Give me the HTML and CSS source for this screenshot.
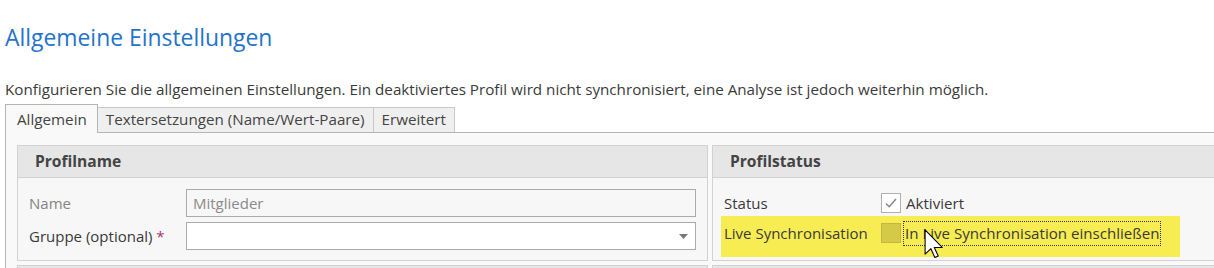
FILE: index.html
```html
<!DOCTYPE html>
<html lang="de">
<head>
  <meta charset="UTF-8">
  <meta name="viewport" content="width=device-width, initial-scale=1.0">
  <title>Allgemeine Einstellungen</title>
  <link rel="stylesheet" href="styles.css">
</head>
<body>
  <div class="page">
    <h1 class="page-title">Allgemeine Einstellungen</h1>
    <p class="page-desc">Konfigurieren Sie die allgemeinen Einstellungen. Ein deaktiviertes Profil wird nicht synchronisiert, eine Analyse ist jedoch weiterhin möglich.</p>

    <div class="tabs">
      <div class="tab-strip">
        <span class="tab active">Allgemein</span>
        <span class="tab">Textersetzungen (Name/Wert-Paare)</span>
        <span class="tab">Erweitert</span>
      </div>

      <div class="tab-panel">
        <div class="group-row">
          <section class="group">
            <div class="group-head">Profilname</div>
            <div class="group-body">
              <div class="field">
                <label class="field-label muted">Name</label>
                <div class="input disabled">Mitglieder</div>
              </div>
              <div class="field">
                <label class="field-label">Gruppe (optional) <span class="req">*</span></label>
                <div class="input select">
                  <svg class="arrow" width="9" height="5" viewBox="0 0 9 5"><path d="M0 0h9L4.5 5z" fill="#7a7a7a"/></svg>
                </div>
              </div>
            </div>
          </section>

          <section class="group">
            <div class="group-head">Profilstatus</div>
            <div class="group-body">
              <div class="field check-field">
                <label class="field-label">Status</label>
                <span class="checkbox checked">
                  <svg width="14" height="12" viewBox="0 0 14 12"><path d="M2 6.5l3.2 3.2L12 2" fill="none" stroke="#8a8a8a" stroke-width="1.6"/></svg>
                </span>
                <span class="check-text">Aktiviert</span>
              </div>
              <div class="field check-field marked">
                <label class="field-label">Live Synchronisation</label>
                <span class="checkbox"></span>
                <span class="check-text focused">In Live Synchronisation einschließen</span>
                <svg class="cursor" width="19" height="29" viewBox="0 0 12 19">
                  <path d="M0.5 0.5v16l3.8-3.6 2.6 5.8 2.2-1-2.6-5.6h5.2z" fill="#fff" stroke="#000" stroke-width="0.7" stroke-linejoin="round"/>
                </svg>
              </div>
            </div>
          </section>
        </div>

        <div class="group-row">
          <section class="group">
            <div class="group-head"></div>
          </section>
          <section class="group">
            <div class="group-head"></div>
          </section>
        </div>
      </div>
    </div>
  </div>
</body>
</html>
```

FILE: styles.css
```css
* {
  box-sizing: border-box;
}

body {
  margin: 0;
  background: #fff;
  font-family: 'Open Sans', 'Noto Sans', sans-serif;
  color: #3a3a3a;
  overflow: hidden;
}

.page {
  padding-left: 5px;
  width: 1500px;
}

.page-title {
  margin: 23px 0 0;
  font-size: 22.9px;
  line-height: 30px;
  font-weight: 400;
  color: #2473c9;
}

.page-desc {
  margin: 26px 0 0;
  font-size: 15.2px;
  line-height: 20px;
  color: #3a3a3a;
}

.tab-strip {
  display: flex;
  align-items: flex-end;
  height: 28px;
  margin-top: 5px;
}

.tab {
  height: 25px;
  padding: 1px 8px 0;
  border: 1px solid #c9c9c9;
  border-bottom: none;
  border-left: none;
  background: #efefef;
  font-size: 15.2px;
  line-height: 20px;
  color: #444;
}

.tab.active {
  position: relative;
  z-index: 1;
  height: 29px;
  margin-bottom: -1px;
  padding: 4px 10px 0 11px;
  border: 1px solid #b5b5b5;
  border-bottom: none;
  background: #f9f9f9;
}

.tab-panel {
  border-top: 1px solid #b5b5b5;
  border-left: 1px solid #b5b5b5;
  background: #f9f9f9;
  padding: 12px 0 0 11px;
}

.group-row {
  display: grid;
  grid-template-columns: 691px 691px;
  gap: 4px;
}

.group-row + .group-row {
  margin-top: 4px;
}

.group {
  border: 1px solid #d2d2d2;
  background: #f7f7f7;
}

.group-head {
  height: 32px;
  padding-left: 17px;
  background: #e6e6e6;
  border-bottom: 1px solid #d2d2d2;
  font-size: 15.6px;
  font-weight: 700;
  line-height: 31px;
  color: #444;
}

.group-body {
  padding: 11px 11px 10px;
  display: flex;
  flex-direction: column;
  gap: 5px;
}

.field {
  display: flex;
  align-items: center;
  height: 28px;
}

.field-label {
  width: 157px;
  flex-shrink: 0;
  font-size: 15px;
  color: #3a3a3a;
}

.field-label.muted {
  color: #858585;
}

.req {
  color: #a8336f;
}

.input {
  flex: 1;
  height: 28px;
  border: 1px solid #ababab;
  background: #fff;
  padding: 0 6px;
  font-size: 15px;
  line-height: 26px;
}

.input.disabled {
  background: #f7f7f7;
  color: #8a8a8a;
}

.input.select {
  display: flex;
  align-items: center;
  justify-content: flex-end;
  padding-right: 7px;
}

.check-field {
  position: relative;
}

.checkbox {
  width: 20px;
  height: 20px;
  border: 1px solid #b0b0b0;
  background: #fff;
  display: flex;
  align-items: center;
  justify-content: center;
  flex-shrink: 0;
}

.check-text {
  margin-left: 4px;
  padding: 2px 1px;
  font-size: 15.1px;
  line-height: 19px;
  color: #3a3a3a;
}

.marked {
  margin: -6px 0 -10px -3px;
  padding: 3px 0 10px 3px;
  height: 41px;
  width: 459px;
  background: #f7ec52;
}

.marked .checkbox {
  background: #d5ca48;
  border-color: #c2b742;
}

.marked .check-text {
  margin-left: 2px;
}

.focused {
  border: 1px dotted #333;
}

.cursor {
  position: absolute;
  left: 203px;
  top: 13px;
}
```
